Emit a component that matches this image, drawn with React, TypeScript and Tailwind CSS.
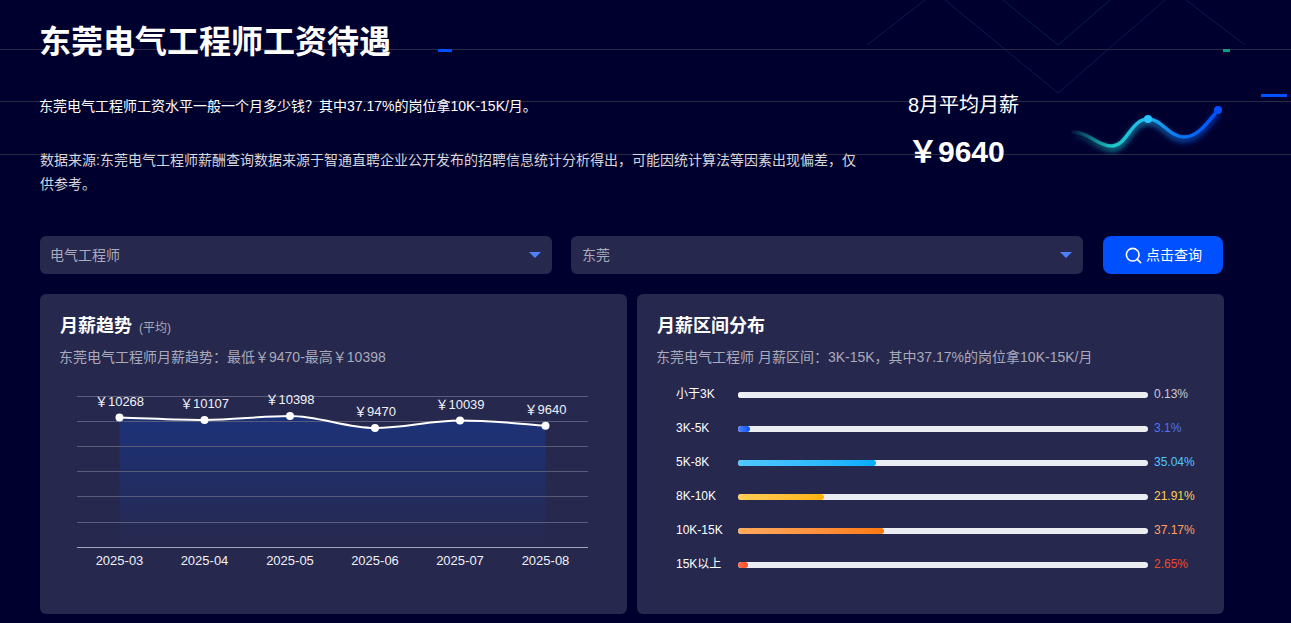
import { Search } from 'lucide-react';

const points = [
    { x: 119.5, y: 417.5, label: '￥10268', labelY: 406, month: '2025-03' },
    { x: 204.5, y: 420, label: '￥10107', labelY: 408, month: '2025-04' },
    { x: 290, y: 416, label: '￥10398', labelY: 404, month: '2025-05' },
    { x: 375, y: 428, label: '￥9470', labelY: 416, month: '2025-06' },
    { x: 460, y: 420.5, label: '￥10039', labelY: 409, month: '2025-07' },
    { x: 545.5, y: 425.7, label: '￥9640', labelY: 414, month: '2025-08' },
];

const gridY = [396.5, 421.5, 446.5, 471.5, 496.5, 522.5];

const linePath =
    'M119.5 417.5 C148 418.3 176 420 204.5 420 C233 420 261 416 290 416 C319 416 346 428 375 428 C404 428 431 420.5 460 420.5 C489 420.5 517 423.5 545.5 425.7';

const ranges = [
    { label: '小于3K', pct: '0.13%', fill: 'w-[3px] bg-[#f4f4f8]', text: 'text-[#c9cbd8]' },
    { label: '3K-5K', pct: '3.1%', fill: 'w-[12px] bg-linear-to-r from-[#4d80ff] to-[#0050ff]', text: 'text-[#4d74f0]' },
    { label: '5K-8K', pct: '35.04%', fill: 'w-[138px] bg-linear-to-r from-[#4fc8ff] to-[#00aeff]', text: 'text-[#4fc8ff]' },
    { label: '8K-10K', pct: '21.91%', fill: 'w-[86px] bg-linear-to-r from-[#ffcf55] to-[#ffb300]', text: 'text-[#ffcf55]' },
    { label: '10K-15K', pct: '37.17%', fill: 'w-[146px] bg-linear-to-r from-[#ffaa5e] to-[#ff7a0a]', text: 'text-[#ffa05c]' },
    { label: '15K以上', pct: '2.65%', fill: 'w-[10px] bg-linear-to-r from-[#ff6a45] to-[#f5502a]', text: 'text-[#f0492a]' },
];

function Backdrop() {
    return (
        <svg className="absolute left-0 top-0 h-[160px] w-[1291px]" viewBox="0 0 1291 160" fill="none">
            <path d="M867 45 L925 0 M945 0 L1058 93 L1165 0 M1186 0 L1245 45" stroke="#0b1a55" strokeWidth="1" />
            <path d="M1003 0 L1058 45 L1110 0" stroke="#07233f" strokeWidth="1" />
            <path d="M0 49.5 H1291 M0 101.5 H1291 M0 154.5 H1291" stroke="#2a2a45" strokeWidth="1" />
            <rect x="438" y="49" width="14" height="3" fill="#0050ff" />
            <rect x="1223" y="49" width="7" height="3" fill="#0f9d84" />
            <rect x="1261" y="94" width="26" height="3" fill="#0050ff" />
        </svg>
    );
}

function Sparkline() {
    const d = 'M2 27 C18 27 26 41 41 41 C56 41 60 14 77 14 C91 14 98 32 113 32 C127 32 137 17 147 5';
    return (
        <svg className="ml-[50px] mt-[14px] h-[52px] w-[152px] shrink-0" viewBox="0 0 152 52" fill="none">
            <defs>
                <linearGradient id="spark" x1="2" y1="0" x2="147" y2="0" gradientUnits="userSpaceOnUse">
                    <stop offset="0" stopColor="#1dc8c8" stopOpacity="0.1" />
                    <stop offset="0.28" stopColor="#1dc8c8" />
                    <stop offset="0.5" stopColor="#25b8f0" />
                    <stop offset="0.72" stopColor="#0a78ee" />
                    <stop offset="1" stopColor="#0050ff" />
                </linearGradient>
                <filter id="sparkGlow" x="-10%" y="-30%" width="120%" height="180%">
                    <feGaussianBlur stdDeviation="2.5" />
                </filter>
            </defs>
            <path d={d} stroke="url(#spark)" strokeWidth="6" opacity="0.55" transform="translate(0 3)" filter="url(#sparkGlow)" />
            <path d={d} stroke="url(#spark)" strokeWidth="3.5" strokeLinecap="round" />
            <circle cx="77" cy="14" r="4" fill="#27c4ff" />
            <circle cx="147" cy="5" r="4" fill="#0050ff" />
        </svg>
    );
}

function Select({ value, inset }: { value: string; inset: string }) {
    return (
        <div className={`flex h-[38px] w-[512px] items-center justify-between rounded-md bg-[#27284e] pr-[11px] text-sm text-[#a9aabb] ${inset}`}>
            <span>{value}</span>
            <span className="h-0 w-0 border-x-[6.5px] border-t-[6px] border-x-transparent border-t-[#4d80ff]" />
        </div>
    );
}

function TrendChart() {
    return (
        <svg className="mt-[13px] block h-[200px] w-[587px]" viewBox="40 380 587 200" fill="none">
            <defs>
                <linearGradient id="area" x1="0" y1="420" x2="0" y2="547" gradientUnits="userSpaceOnUse">
                    <stop offset="0" stopColor="#1c3278" />
                    <stop offset="1" stopColor="#27284e" />
                </linearGradient>
            </defs>
            <path d={`${linePath} L545.5 547 L119.5 547 Z`} fill="url(#area)" />
            {gridY.map((y) => (
                <line key={y} x1="77" x2="588" y1={y} y2={y} stroke="#5a5b78" strokeWidth="1" />
            ))}
            <line x1="77" x2="588" y1="547.5" y2="547.5" stroke="#a3a4b8" strokeWidth="1" />
            <path d={linePath} stroke="#ffffff" strokeWidth="2" />
            {points.map((p) => (
                <g key={p.month}>
                    <circle cx={p.x} cy={p.y} r="4" fill="#ffffff" />
                    <text x={p.x} y={p.labelY} textAnchor="middle" fontSize="13" fill="#f0f1f6">
                        {p.label}
                    </text>
                    <text x={p.x} y="564.5" textAnchor="middle" fontSize="13" fill="#f0f1f6">
                        {p.month}
                    </text>
                </g>
            ))}
        </svg>
    );
}

export default function App() {
    return (
        <div className="relative min-h-screen overflow-hidden bg-[#00002e] font-['Liberation_Sans','Noto_Sans_CJK_SC',sans-serif] text-white">
            <Backdrop />
            <div className="relative w-[1224px] pb-[9px] pl-10">
                <div className="flex">
                    <div className="w-[820px] shrink-0 pt-[21px]">
                        <h1 className="-ml-px text-[32px] font-bold leading-[42px]">东莞电气工程师工资待遇</h1>
                        <p className="-ml-px mt-[31px] text-sm leading-6">东莞电气工程师工资水平一般一个月多少钱？其中37.17%的岗位拿10K-15K/月。</p>
                        <p className="mt-[30px] text-sm leading-6 text-[#d6d6dc]">
                            数据来源:东莞电气工程师薪酬查询数据来源于智通直聘企业公开发布的招聘信息统计分析得出，可能因统计算法等因素出现偏差，仅供参考。
                        </p>
                    </div>
                    <div className="ml-12 flex pt-[91px]">
                        <div className="w-[113px] whitespace-nowrap">
                            <div className="text-[20px] leading-7">8月平均月薪</div>
                            <div className="mt-[15px] text-[30px] font-bold leading-[36px]">￥9640</div>
                        </div>
                        <Sparkline />
                    </div>
                </div>

                <div className="mt-10 flex">
                    <Select value="电气工程师" inset="pl-[10px]" />
                    <div className="ml-[19px]">
                        <Select value="东莞" inset="pl-[11px]" />
                    </div>
                    <button className="ml-5 flex h-[38px] w-[120px] items-center justify-center gap-[3px] rounded-lg bg-[#0050ff] text-sm">
                        <Search size={19} strokeWidth={2} />
                        <span>点击查询</span>
                    </button>
                </div>

                <div className="mt-5 flex gap-[10px]">
                    <div className="h-[320px] w-[587px] rounded-md bg-[#27284e]">
                        <div className="flex items-baseline pl-5 pt-5">
                            <h2 className="text-lg font-bold leading-6">月薪趋势</h2>
                            <span className="ml-[7px] text-xs text-[#a9aabb]">(平均)</span>
                        </div>
                        <p className="mt-[9px] pl-[19px] text-sm leading-5 text-[#a9aabb]">东莞电气工程师月薪趋势：最低￥9470-最高￥10398</p>
                        <TrendChart />
                    </div>
                    <div className="h-[320px] w-[587px] rounded-md bg-[#27284e]">
                        <h2 className="pl-5 pt-5 text-lg font-bold leading-6">月薪区间分布</h2>
                        <p className="mt-[9px] pl-[19px] text-sm leading-5 text-[#a9aabb]">东莞电气工程师 月薪区间：3K-15K，其中37.17%的岗位拿10K-15K/月</p>
                        <div className="mt-[16px] flex flex-col gap-[10px] pl-[39px]">
                            {ranges.map((r) => (
                                <div key={r.label} className="flex h-6 items-center">
                                    <span className="w-[62px] pb-[3px] text-xs">{r.label}</span>
                                    <div className="h-[6px] w-[410px] overflow-hidden rounded-full bg-[#ecedf2]">
                                        <div className={`h-full rounded-full ${r.fill}`} />
                                    </div>
                                    <span className={`ml-[6px] pb-[3px] text-xs ${r.text}`}>{r.pct}</span>
                                </div>
                            ))}
                        </div>
                    </div>
                </div>
            </div>
        </div>
    );
}
